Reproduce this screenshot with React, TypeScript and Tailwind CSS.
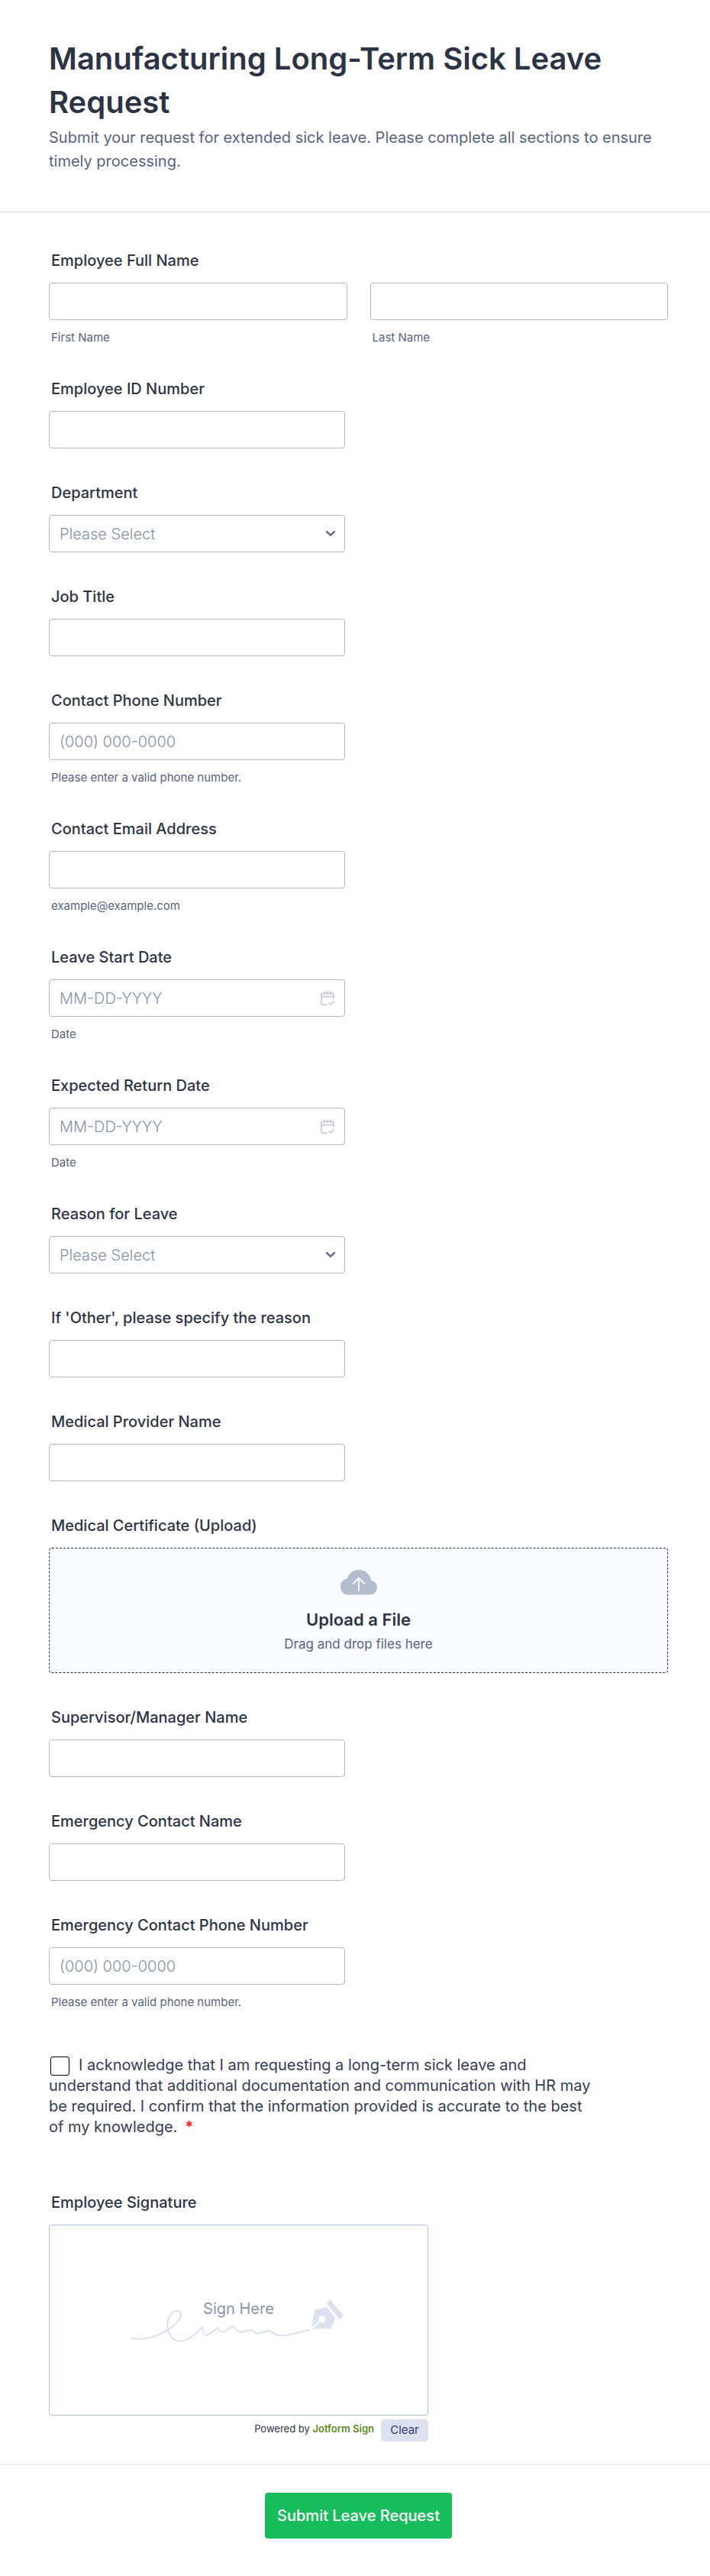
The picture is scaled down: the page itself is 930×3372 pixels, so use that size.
import React, { useState } from "react";

type FieldProps = {
  id: string;
  label: string;
  hint?: string;
  children: React.ReactNode;
};

const inputClass =
  "block w-full h-[49px] rounded border border-[#b0b6c8] bg-white px-[13px] text-xl font-light text-[#2c3345] placeholder-[#8394a8] outline-none focus:border-[#4277ff]";

const Hint = ({ children }: { children: React.ReactNode }) => (
  <span className="block mt-[14px] pl-[3px] text-[15px] leading-[18px] text-[#57647e]">{children}</span>
);

const Label = ({ id, children }: { id?: string; children: React.ReactNode }) => (
  <label htmlFor={id} className="block mb-4 pl-[3px] text-xl leading-[26px] font-[450] text-[#2c3345]">
    {children}
  </label>
);

const Field = ({ id, label, hint, children }: FieldProps) => (
  <div className="w-full max-w-[388px]">
    <Label id={id}>{label}</Label>
    {children}
    {hint && <Hint>{hint}</Hint>}
  </div>
);

const TextField = ({ id, label, hint, placeholder, type = "text" }: any) => (
  <Field id={id} label={label} hint={hint}>
    <input id={id} name={id} type={type} placeholder={placeholder} className={inputClass} />
  </Field>
);

const SelectField = ({ id, label, options }: { id: string; label: string; options: string[] }) => {
  const [value, setValue] = useState("");

  return (
    <Field id={id} label={label}>
      <div className="relative">
        <select
          id={id}
          name={id}
          value={value}
          onChange={(e) => setValue(e.target.value)}
          className="block w-full h-[49px] appearance-none rounded border border-[#b0b6c8] bg-white px-[13px] text-xl font-light text-[#8394a8] outline-none focus:border-[#4277ff]"
        >
          <option value="">Please Select</option>
          {options.map((option) => (
            <option key={option} value={option}>
              {option}
            </option>
          ))}
        </select>
        <svg
          className="absolute right-3 top-5 pointer-events-none"
          width="14"
          height="9"
          viewBox="0 0 14 9"
          fill="none"
          stroke="#5b6583"
          strokeWidth="2.4"
        >
          <path d="M1.4 1.4 7 6.6l5.6-5.2" />
        </svg>
      </div>
    </Field>
  );
};

const DateField = ({ id, label }: { id: string; label: string }) => (
  <Field id={id} label={label} hint="Date">
    <div className="relative">
      <input id={id} name={id} type="text" placeholder="MM-DD-YYYY" className={inputClass} />
      <svg
        className="absolute right-[14px] top-[15px] pointer-events-none"
        width="18"
        height="20"
        viewBox="0 0 18 20"
        fill="none"
        stroke="#c3c8d8"
        strokeWidth="1.6"
        strokeLinecap="round"
        strokeLinejoin="round"
      >
        <path d="M8 18.2H3a2 2 0 0 1-2-2V5a2 2 0 0 1 2-2h12a2 2 0 0 1 2 2v5.5M1 7.8h16M5 1v4M9 1v4M13 1v4M10.8 15.8l2.2 2.2 4-4" />
      </svg>
    </div>
  </Field>
);

const UploadBox = () => (
  <div className="w-full">
    <Label id="certificate">Medical Certificate (Upload)</Label>
    <label
      htmlFor="certificate"
      className="flex h-[164px] w-full cursor-pointer flex-col items-center rounded border border-dashed border-[#2c3345] bg-[#fafbff] pt-7"
    >
      <svg width="48" height="33" viewBox="0 0 48 33" fill="none">
        <path
          d="M9.6 32.6C4.3 32.6 0 28 0 22.2c0-5.4 3.7-9.8 8.6-10.6C10.6 4.8 16.6 0 24 0c8.3 0 14.7 5.8 16 13.7 4.5.9 8 4.5 8 9.4 0 5.3-4.2 9.5-9.4 9.5H9.6Z"
          fill="#b4bccf"
        />
        <path d="M24 28V11M16 18.5l8-8 8 8" stroke="#fafbff" strokeWidth="1.8" />
      </svg>
      <span className="mt-[18px] text-[22px] leading-7 font-semibold text-[#2c3345]">Upload a File</span>
      <span className="mt-[6px] text-[17px] leading-6 text-[#57647e]">Drag and drop files here</span>
      <input id="certificate" name="certificate" type="file" className="sr-only" />
    </label>
  </div>
);

const Signature = () => (
  <div className="w-full max-w-[497px]">
    <Label>Employee Signature</Label>
    <div className="relative flex h-[250px] items-center justify-center rounded border border-[#a9c0dc] bg-white">
      <svg width="285" height="60" viewBox="30 51 854 180" fill="none">
        <path
          d="M36 212C85 222 130 210 180 178C215 155 232 135 230 115C226 98 192 100 180 140C170 180 190 222 225 224C260 224 295 190 315 168C318 185 316 200 330 200C350 198 362 180 374 171C382 182 384 188 397 187C413 186 420 170 436 163C446 174 448 188 464 188C480 188 492 181 508 180C520 184 520 195 535 194C550 192 562 184 578 183C590 186 598 202 622 202C655 202 700 188 736 180"
          stroke="#dce1f0"
          strokeWidth="6"
          strokeLinecap="round"
          strokeLinejoin="round"
        />
        <path d="M757 101 803 90 838 133 819 174 741 177Z" fill="#dce1f0" />
        <path d="M738 180 780 142" stroke="#fff" strokeWidth="6" />
        <circle cx="784" cy="138" r="14" fill="#fff" />
        <path d="M817 61 870 124 854 138 802 75Z" fill="#dce1f0" />
      </svg>
      <span className="absolute inset-x-0 top-[95px] text-center text-xl leading-7 text-[#8d94a9]">Sign Here</span>
    </div>
    <div className="mt-[5px] flex items-start justify-end gap-[9px]">
      <span className="text-[13px] leading-6 text-[#2c3345]">
        Powered by{" "}
        <a href="#" className="font-semibold text-[#5b8a1e]">
          Jotform Sign
        </a>
      </span>
      <button type="button" className="h-[29px] w-[62px] rounded-[5px] bg-[#dce1f2] text-[15px] text-[#2f406e]">
        Clear
      </button>
    </div>
  </div>
);

const App = () => {
  const handleSubmit = (e: any) => {
    e.preventDefault();
  };

  return (
    <form onSubmit={handleSubmit} className="w-full bg-white font-['Inter',sans-serif] text-[#2c3345]">
      <header className="border-b border-[#d3d9ea] pt-12 pb-[50px] pl-16 pr-[55px]">
        <h1 className="text-[40px] leading-[57px] font-semibold text-[#2c3345]">
          Manufacturing Long-Term Sick Leave Request
        </h1>
        <p className="mt-[3px] text-xl leading-[31px] text-[#57647e]">
          Submit your request for extended sick leave. Please complete all sections to ensure timely processing.
        </p>
      </header>

      <div className="flex flex-col gap-[45px] pt-[50px] pb-[29px] pl-16 pr-[55px]">
        <fieldset>
          <legend className="block mb-4 pl-[3px] text-xl leading-[26px] font-[450] text-[#2c3345]">
            Employee Full Name
          </legend>
          <div className="grid grid-cols-2 gap-[30px]">
            <label>
              <input name="firstName" type="text" className={inputClass} />
              <Hint>First Name</Hint>
            </label>
            <label>
              <input name="lastName" type="text" className={inputClass} />
              <Hint>Last Name</Hint>
            </label>
          </div>
        </fieldset>
        <TextField id="employeeId" label="Employee ID Number" />
        <SelectField
          id="department"
          label="Department"
          options={["Production", "Assembly", "Quality Control", "Maintenance", "Warehouse"]}
        />
        <TextField id="jobTitle" label="Job Title" />
        <TextField
          id="phone"
          type="tel"
          label="Contact Phone Number"
          placeholder="(000) 000-0000"
          hint="Please enter a valid phone number."
        />
        <TextField id="email" type="email" label="Contact Email Address" hint="example@example.com" />
        <DateField id="startDate" label="Leave Start Date" />
        <DateField id="returnDate" label="Expected Return Date" />
        <SelectField id="reason" label="Reason for Leave" options={["Illness", "Injury", "Surgery", "Other"]} />
        <TextField id="otherReason" label="If 'Other', please specify the reason" />
        <TextField id="provider" label="Medical Provider Name" />
        <UploadBox />
        <TextField id="supervisor" label="Supervisor/Manager Name" />
        <TextField id="emergencyName" label="Emergency Contact Name" />
        <TextField
          id="emergencyPhone"
          type="tel"
          label="Emergency Contact Phone Number"
          placeholder="(000) 000-0000"
          hint="Please enter a valid phone number."
        />

        <div className="w-full max-w-[720px] pt-[15px] pb-[27px] text-xl leading-[27px] text-[#343c55]">
          <input
            id="acknowledge"
            name="acknowledge"
            type="checkbox"
            className="mr-3 ml-[2px] size-[25px] appearance-none rounded-[3px] border border-black align-middle checked:bg-[#2c3345]"
          />
          <label htmlFor="acknowledge">
            I acknowledge that I am requesting a long-term sick leave and understand that additional documentation and
            communication with HR may be required. I confirm that the information provided is accurate to the best of my
            knowledge.
          </label>
          <span className="ml-[10px] font-bold text-[#ff1f1f]">*</span>
        </div>

        <Signature />
      </div>

      <footer className="flex justify-center border-t-2 border-[#f0f0f6] pt-9 pb-12 pl-16 pr-[55px]">
        <button type="submit" className="h-[60px] rounded bg-[#18bd5b] px-4 text-xl font-[450] text-white">
          Submit Leave Request
        </button>
      </footer>
    </form>
  );
};

export default App;
